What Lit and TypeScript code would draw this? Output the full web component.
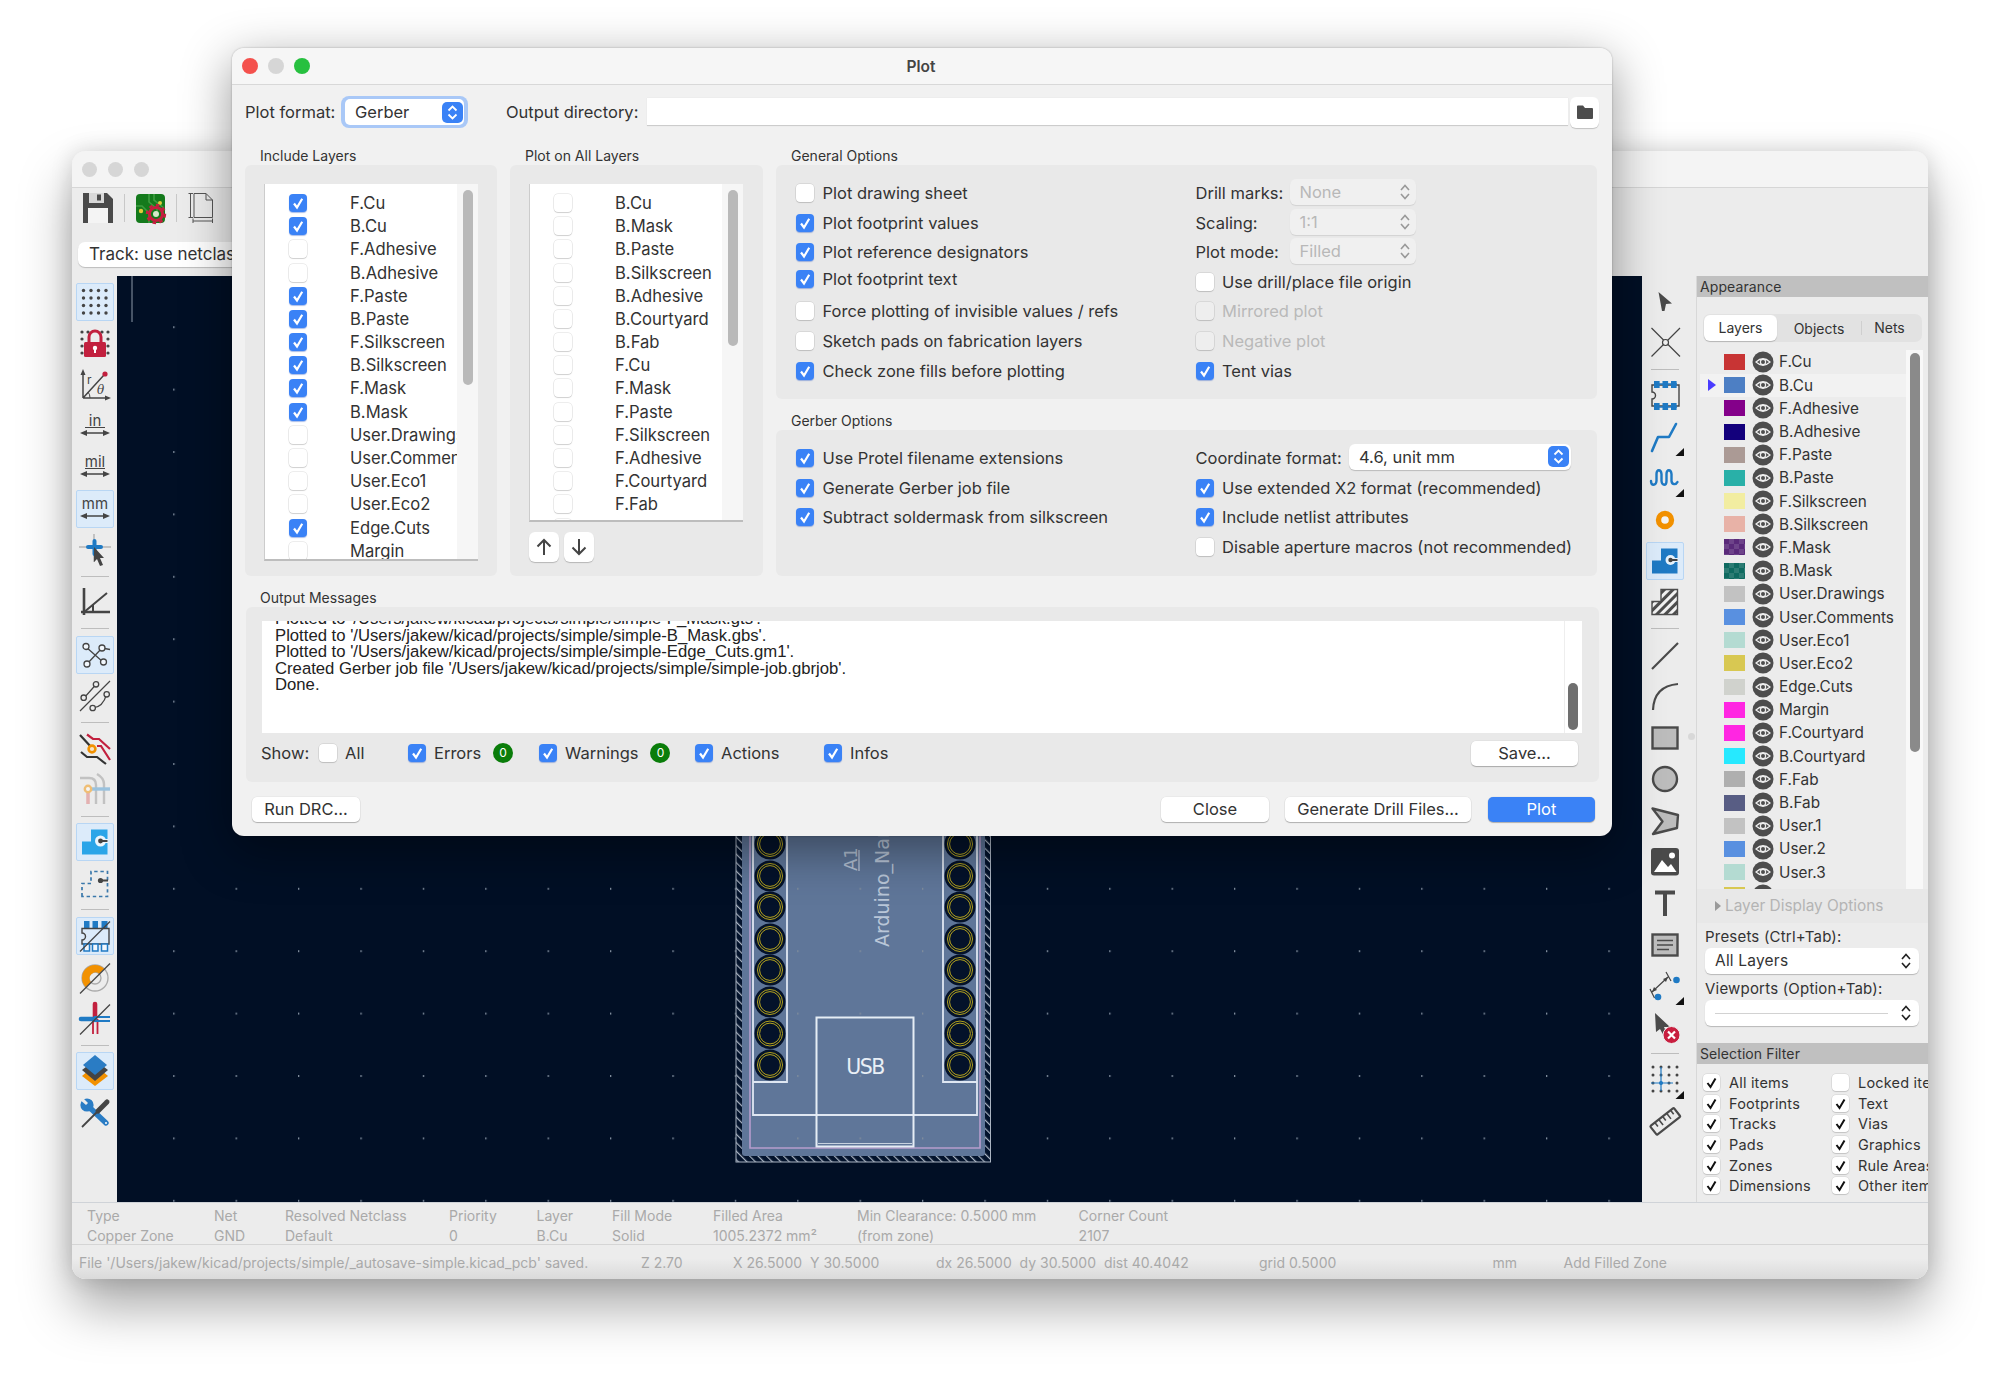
import { LitElement, html, css, svg } from "lit";
import { customElement } from "lit/decorators.js";

const DARK = "#4a4a4a";
const BLUE = "#1f7ac4";
const RED = "#c2203e";
const ORANGE = "#f29100";

const range = (a: number[], b: number[], r: number, c: string) =>
  a.flatMap((x) => b.map((y) => svg`<circle cx=${x} cy=${y} r=${r} fill=${c}></circle>`));

const flyout = svg`<polygon points="26.5,35 35,27 35,35" fill="#111"></polygon>`;
const slash = svg`<path d="M1 31.5L31 1.5" stroke="#444" stroke-width="1.3" fill="none"></path>`;
const arrows = svg`<path d="M4 23H28" stroke="#444" stroke-width="1.5"></path><polygon points="1,23 8,20 8,26" fill="#444"></polygon><polygon points="31,23 24,20 24,26" fill="#444"></polygon>`;
const unit = (t: string) =>
  svg`<text x="16" y="16" text-anchor="middle" font-family="Inter,sans-serif" font-size="15" fill="#444">${t}</text><path d="M6 17.5H26" stroke="#444" stroke-width="1" opacity=${t === "mm" ? 0 : 1}></path>${arrows}`;

const zoneShape = "M3 28.5V15.5H12V3.5H28.5V28.5Z";

const icons: Record<string, unknown> = {
  grid: range([4.5, 12, 19.5, 27], [4.5, 12, 19.5, 27], 1.7, "#444"),
  lock: svg`${range([3, 29], [5, 12, 19, 26], 1.6, "#444")}${range([9, 23], [5], 1.6, "#444")}
    <path d="M10 17V10a6 6 0 0 1 12 0v7" fill="none" stroke=${RED} stroke-width="3"></path>
    <rect x="5" y="15" width="22" height="15" rx="1.5" fill=${RED}></rect>
    <circle cx="16" cy="21" r="2.2" fill="#fff"></circle><rect x="15" y="21" width="2" height="5" fill="#fff"></rect>`,
  polar: svg`<path d="M4 30H29M4 30V5M4 30L25 7" stroke="#444" stroke-width="1.5" fill="none"></path>
    <polygon points="32,30 26,27.5 26,32.5" fill="#444"></polygon><polygon points="4,1 1.5,7 6.5,7" fill="#444"></polygon>
    <circle cx="26" cy="6" r="2.6" fill=${RED}></circle>
    <path d="M11 30a9 9 0 0 0 -2 -6" stroke="#444" fill="none"></path>
    <text x="8" y="16" font-family="Inter,sans-serif" font-size="12" fill="#444">r</text>
    <text x="18" y="26" font-family="DejaVu Serif,serif" font-style="italic" font-size="12" fill="#444">θ</text>`,
  in: unit("in"),
  mil: unit("mil"),
  mm: unit("mm"),
  cursor: svg`<path d="M0 13H32M15 0V28" stroke="#999" stroke-width="1"></path>
    <path d="M9 13H22M15.5 7V20" stroke="#1f7ac4" stroke-width="4" stroke-linecap="round"></path>
    <polygon points="15,13 25,24 21,24 24,31 21,32 18,25 15,28" fill="#444"></polygon>`,
  corner: svg`<path d="M5 2V29M2 26H31" stroke="#444" stroke-width="2.6" fill="none"></path>
    <path d="M4 27L28 7M14 18V26" stroke="#444" stroke-width="2" fill="none"></path>`,
  net: svg`<path d="M7 8L24 23M8 25L23 9L31 10.5" stroke="#444" stroke-width="1.3" fill="none"></path>
    <g fill="#f2f7fc" stroke="#444" stroke-width="1.3"><circle cx="7" cy="7.5" r="3"></circle><circle cx="23" cy="9" r="3"></circle><circle cx="8" cy="25" r="3"></circle><circle cx="24.5" cy="23" r="3"></circle></g>`,
  curved: svg`<path d="M1 31L31 1M5 18L17 4.5M14 28Q24 27 27.5 14.5" stroke="#444" stroke-width="1.2" fill="none"></path>
    <g fill="#ececec" stroke="#444" stroke-width="1.3"><circle cx="4.7" cy="17.7" r="2.7"></circle><circle cx="17" cy="4.3" r="2.7"></circle><circle cx="13.7" cy="28" r="2.7"></circle><circle cx="27.7" cy="14.3" r="2.7"></circle></g>`,
  trackvia: svg`<path d="M8 1.5L14 6H20L31 16M18 13H22L31 27" stroke=${RED} stroke-width="2.2" fill="none"></path>
    <path d="M1 2L13 15M2 19L8 24H18L27 31" stroke="#333" stroke-width="2.2" fill="none"></path>
    <circle cx="13" cy="16" r="3.4" fill="#f4e3c8" stroke=${ORANGE} stroke-width="2.6"></circle>`,
  faded: svg`<g opacity=".5" fill="none"><path d="M1 4H10Q17 4 17 11V30" stroke="#999" stroke-width="2.4"></path><path d="M18 0Q25 4 25 10V30" stroke="#999" stroke-width="2.4"></path><path d="M9 18V30" stroke="#d77" stroke-width="3.5"></path><path d="M12 15H31" stroke="#4b9ad1" stroke-width="3.4"></path><circle cx="9" cy="15" r="3.2" stroke=${ORANGE} stroke-width="2.4" fill="#fff"></circle></g>`,
  zoneA: svg`<path d=${zoneShape} fill="#2aa5e8"></path><circle cx="21.5" cy="15" r="5.5" fill="#eaf6fd"></circle><rect x="22" y="13" width="7" height="4" fill="#eaf6fd"></rect><circle cx="21.5" cy="15" r="2.4" fill="#444"></circle><path d="M21.5 15H28.5" stroke="#444" stroke-width="2"></path>`,
  zoneD: svg`<path d=${zoneShape} fill="none" stroke="#3a78ab" stroke-width="1.7" stroke-dasharray="3.4 2.8"></path><circle cx="21.5" cy="12.5" r="2.6" fill="#444"></circle><path d="M21.5 12.5H29" stroke="#444" stroke-width="2"></path>`,
  fpSlash: svg`<g fill=${BLUE}><rect x="5" y="1" width="5.5" height="7"></rect><rect x="13.5" y="1" width="5.5" height="7"></rect><rect x="22.5" y="1" width="6" height="7"></rect></g>
    <path d="M3 8.5H30V24H3V20a3.5 3.5 0 0 0 0 -7Z" fill="none" stroke="#444" stroke-width="1.4"></path>
    <g fill="#f2f7fc" stroke=${BLUE} stroke-width="1.5"><rect x="5" y="24" width="5.5" height="7"></rect><rect x="13.5" y="24" width="5.5" height="7"></rect><rect x="22.5" y="24" width="6" height="7"></rect></g>${slash}`,
  padSlash: svg`<circle cx="16" cy="16" r="13" fill="none" stroke="#aaa" stroke-width="1.3"></circle><circle cx="16" cy="16" r="6" fill="none" stroke="#aaa" stroke-width="1.3"></circle>
    <path d="M25.2 6.8A13 13 0 0 0 6.8 25.2L11.8 20.2A6 6 0 0 1 20.2 11.8Z" fill=${ORANGE}></path>${slash}`,
  trackSlash: svg`<path d="M16 1V17" stroke=${RED} stroke-width="4.6" stroke-linecap="round"></path><path d="M14 16V31M18.5 16V31" stroke=${RED} stroke-width="1.8"></path>
    <path d="M2 16H16" stroke=${BLUE} stroke-width="4.6" stroke-linecap="round"></path><path d="M15 14H31M15 18H31" stroke=${BLUE} stroke-width="1.8"></path>${slash}`,
  layers: svg`<polygon points="3,21 16,10 29,21 16,31" fill=${ORANGE}></polygon><polygon points="3,15 16,5 29,15 16,26" fill="#444"></polygon><polygon points="4,10 16,0 28,10 16,20" fill="#2a7cc4"></polygon>`,
  tools: svg`<path d="M9 9L27 26" stroke="#2a7cc4" stroke-width="5.4" stroke-linecap="round"></path><circle cx="8" cy="8" r="6.6" fill="#2a7cc4"></circle>
    <polygon points="2,-1 9,6 7,8 0,2" fill="#ececec"></polygon><circle cx="27" cy="26" r="1" fill="#fff"></circle>
    <path d="M3 30L19 14" stroke="#444" stroke-width="1.8"></path><path d="M19 14L28 5" stroke="#444" stroke-width="5" stroke-linecap="round"></path>`,
  arrow: svg`<polygon points="9.5,6 23,17.5 17,18 15.5,25 13,25" fill=${DARK}></polygon>`,
  cross: svg`<path d="M2.5 1L31 29.5M31 1L2.5 29.5" stroke="#444" stroke-width="1.2"></path><circle cx="16.5" cy="15.5" r="3" fill="#f0f0f0" stroke="#444" stroke-width="1.2"></circle>`,
  fp: svg`<path d="M3 6H30V27H3V20a3.5 3.5 0 0 0 0 -7Z" fill="none" stroke="#444" stroke-width="1.4"></path><g fill="#1f7ac4">${[5, 13.5, 22].map((x) => svg`<rect x=${x} y="2" width="5.6" height="7"></rect><rect x=${x} y="24" width="5.6" height="7"></rect>`)}</g><path d="M5 5H28M5 28H28" stroke=${BLUE} stroke-width="1.6"></path>`,
  route: svg`<path d="M3 30L9 16H20L27 3" fill="none" stroke=${BLUE} stroke-width="2.6" stroke-linecap="round" stroke-linejoin="round"></path>${flyout}`,
  tune: svg`<path d="M2 19c0 5 5 5 5.5 0V12c0-5 4.5-5 5 0v7c.5 5 5 5 5 0v-7c0-5 4.5-5 5 0v7c.5 4 4.5 4 6 1" fill="none" stroke=${BLUE} stroke-width="2.4" stroke-linecap="round"></path>${flyout}`,
  via: svg`<circle cx="16" cy="16" r="6.5" fill="#f4f4f4" stroke=${ORANGE} stroke-width="5.4"></circle>`,
  zoneB: svg`<path d=${zoneShape} fill=${BLUE}></path><circle cx="21.5" cy="15" r="5" fill="#e6f2fb"></circle><rect x="22" y="13" width="7" height="4" fill="#e6f2fb"></rect><circle cx="21.5" cy="15" r="2.2" fill="#444"></circle><path d="M21.5 15H28.5" stroke="#444" stroke-width="2"></path>`,
  hatch: svg`<defs><pattern id="hp" width="6" height="6" patternUnits="userSpaceOnUse" patternTransform="rotate(45)"><rect width="6" height="6" fill="#f2f2f2"></rect><rect width="3" height="6" fill="#4d4d4d"></rect></pattern></defs><path d=${zoneShape} fill="url(#hp)" stroke="#4d4d4d" stroke-width="1.4"></path>`,
  line: svg`<path d="M3 30L29 4" stroke=${DARK} stroke-width="2.2"></path>`,
  arc: svg`<path d="M4 30Q5 6 29 4" fill="none" stroke=${DARK} stroke-width="2.2"></path>`,
  rect: svg`<rect x="3.5" y="5.5" width="25" height="21" fill="#bcbcbc" stroke=${DARK} stroke-width="2.4"></rect>`,
  circle: svg`<circle cx="16" cy="16" r="12" fill="#bcbcbc" stroke=${DARK} stroke-width="2.4"></circle>`,
  poly: svg`<path d="M3.5 4.5L29 11L28 24L4 30L13.5 17.5Z" fill="#bcbcbc" stroke=${DARK} stroke-width="2.4" stroke-linejoin="round"></path>`,
  image: svg`<rect x="2" y="2" width="28" height="27.5" rx="3" fill=${DARK}></rect><path d="M5 26L13 14L19 21L22 18L27.5 26Z" fill="#fff"></path><circle cx="23" cy="9.5" r="3" fill="#fff"></circle>`,
  text: svg`<path d="M6 5.5H26M16 5.5V29" stroke=${DARK} stroke-width="4" fill="none"></path>`,
  textbox: svg`<rect x="3.5" y="5.5" width="25" height="21" fill="#bcbcbc" stroke=${DARK} stroke-width="2.4"></rect><path d="M8 11.5H24M8 16H24M8 20.5H20" stroke=${DARK} stroke-width="1.4"></path>`,
  dim: svg`<path d="M3 22L19 7M5.5 28L1 19M22 11L17 2" stroke="#444" stroke-width="1.2" fill="none"></path><polygon points="3,22 8,20 5,17" fill="#444"></polygon><polygon points="19,7 14,9 17,12" fill="#444"></polygon><circle cx="9" cy="27" r="3.3" fill=${BLUE}></circle><circle cx="27.5" cy="10" r="3.3" fill=${BLUE}></circle>${flyout}`,
  del: svg`<polygon points="6,2 21,16 15,16 19,25 16,27 11,18 7,21" fill=${DARK}></polygon><circle cx="22.5" cy="24" r="8.5" fill="#c81e3f" stroke="#eee" stroke-width="1"></circle><path d="M19 20.5L26 27.5M26 20.5L19 27.5" stroke="#fff" stroke-width="2.2"></path>`,
  gridCross: svg`${range([4, 12, 20, 28], [3, 11, 19, 27], 1.5, "#444")}<path d="M12 3V27M2 19H24" stroke=${BLUE} stroke-width="1.2"></path><circle cx="12" cy="19" r="2" fill=${BLUE}></circle>${flyout}`,
  ruler: svg`<g transform="rotate(-38 16 16)"><rect x="1" y="11" width="30" height="11" rx="1" fill="none" stroke=${DARK} stroke-width="2.2"></rect><path d="M7 11V16M12 11V18M17 11V16M22 11V18M27 11V16" stroke=${DARK} stroke-width="1.6"></path></g>`,
};

const icon = (n: string, size = 32) =>
  html`<svg class="ic" width=${size} height=${size} viewBox="0 0 32 32">${icons[n]}</svg>`;

const leftTools = ["grid*", "lock", "polar", "in", "mil", "mm*", "cursor", "-", "corner", "-", "net*", "curved", "-", "trackvia", "faded", "-", "zoneA*", "zoneD", "-", "fpSlash*", "padSlash", "trackSlash", "-", "layers*", "tools"];
const rightTools = ["arrow", "cross", "-", "fp", "route", "tune", "via", "zoneB*", "hatch", "-", "line", "arc", "rect", "circle", "poly", "image", "text", "textbox", "dim", "del", "-", "gridCross", "ruler"];

const toolStrip = (items: string[]) =>
  items.map((t) =>
    t === "-"
      ? html`<div class="tdiv"></div>`
      : html`<div class="tool ${t.endsWith("*") ? "on" : ""}">${icon(t.replace("*", ""))}</div>`
  );

const check = (on: boolean, dis = false) =>
  html`<span class="cb ${on ? "on" : ""} ${dis ? "dis" : ""}">${on ? html`<svg width="18" height="18" viewBox="0 0 18 18"><path d="M5 9.5L8 13.5L13.2 4.8" fill="none" stroke="#fff" stroke-width="2.2"></path></svg>` : ""}</span>`;

const stepBlue = html`<span class="stepblue"><svg width="21" height="21" viewBox="0 0 21 21"><path d="M6.5 8.5L10.5 4.5L14.5 8.5M6.5 12.5L10.5 16.5L14.5 12.5" fill="none" stroke="#fff" stroke-width="1.8"></path></svg></span>`;
const stepGrey = (c: string) => html`<svg width="12" height="20" viewBox="0 0 12 20"><path d="M2 8L6 3.5L10 8M2 12L6 16.5L10 12" fill="none" stroke=${c} stroke-width="1.6"></path></svg>`;

const inc: [string, boolean][] = [["F.Cu", true], ["B.Cu", true], ["F.Adhesive", false], ["B.Adhesive", false], ["F.Paste", true], ["B.Paste", true], ["F.Silkscreen", true], ["B.Silkscreen", true], ["F.Mask", true], ["B.Mask", true], ["User.Drawings", false], ["User.Comments", false], ["User.Eco1", false], ["User.Eco2", false], ["Edge.Cuts", true], ["Margin", false]];
const all = ["B.Cu", "B.Mask", "B.Paste", "B.Silkscreen", "B.Adhesive", "B.Courtyard", "B.Fab", "F.Cu", "F.Mask", "F.Paste", "F.Silkscreen", "F.Adhesive", "F.Courtyard", "F.Fab", ""];

const layers: [string, string, boolean?][] = [["F.Cu", "#c83434"], ["B.Cu", "#4d7fc4"], ["F.Adhesive", "#84008a"], ["B.Adhesive", "#13007c"], ["F.Paste", "#ab9a95"], ["B.Paste", "#29b0a8"], ["F.Silkscreen", "#f2eda1"], ["B.Silkscreen", "#e8b2a7"], ["F.Mask", "#5a2a7a", true], ["B.Mask", "#0f6a60", true], ["User.Drawings", "#c2c2c2"], ["User.Comments", "#5990e0"], ["User.Eco1", "#b4dbd2"], ["User.Eco2", "#d8c852"], ["Edge.Cuts", "#d0d2cd"], ["Margin", "#ff26e2"], ["F.Courtyard", "#ff26e2"], ["B.Courtyard", "#26e9ff"], ["F.Fab", "#afafaf"], ["B.Fab", "#585d84"], ["User.1", "#c2c2c2"], ["User.2", "#5990e0"], ["User.3", "#b4dbd2"], ["", "#d8c852"]];

const filters: [string, boolean, string, boolean][] = [["All items", true, "Locked items", false], ["Footprints", true, "Text", true], ["Tracks", true, "Vias", true], ["Pads", true, "Graphics", true], ["Zones", true, "Rule Areas", true], ["Dimensions", true, "Other items", true]];

const info: [string, string][] = [["Type", "Copper Zone"], ["Net", "GND"], ["Resolved Netclass", "Default"], ["Priority", "0"], ["Layer", "B.Cu"], ["Fill Mode", "Solid"], ["Filled Area", "1005.2372 mm²"], ["Min Clearance: 0.5000 mm", "(from zone)"], ["Corner Count", "2107"]];
const status = ["File '/Users/jakew/kicad/projects/simple/_autosave-simple.kicad_pcb' saved.", "Z 2.70", "X 26.5000  Y 30.5000", "dx 26.5000  dy 30.5000  dist 40.4042", "grid 0.5000", "mm", "Add Filled Zone"];

const pads = [844, 876, 907, 939, 970, 1002, 1033.5, 1065];

const pcb = html`<svg class="pcb" viewBox="117 276 1525 926" width="1525" height="926">
  <defs>
    <pattern id="gridp" x="48.4" y="76.6" width="62.4" height="62.4" patternUnits="userSpaceOnUse"><rect x="0" y="0" width="1.3" height="2" fill="#7f8c9c"></rect></pattern>
    <pattern id="court" width="6" height="6" patternUnits="userSpaceOnUse" patternTransform="rotate(-45)"><rect width="6" height="6" fill="#03132c"></rect><rect width="1.2" height="6" fill="#aab4c2"></rect></pattern>
  </defs>
  <rect x="117" y="276" width="1525" height="926" fill="#010f25"></rect>
  <path d="M132 276V322" stroke="#8d99a9" stroke-width="1"></path>
  <rect x="736" y="600" width="254.5" height="562" fill="url(#court)" stroke="#aab4c2" stroke-width="1"></rect>
  <rect x="742" y="600" width="243" height="556" rx="3" fill="#5f7699"></rect>
  <rect x="117" y="276" width="1525" height="926" fill="url(#gridp)"></rect>
  <path d="M750 800V1148H980V800" fill="none" stroke="#b69dcc" stroke-width="1.6"></path>
  <path d="M753 800V1115H977V800M787 800V1082H753M943 800V1082H977" fill="none" stroke="#dfe7f2" stroke-width="1.8"></path>
  <rect x="816.5" y="1017.5" width="97" height="129" fill="none" stroke="#e6edf5" stroke-width="2"></rect>
  <path d="M818 1143.5H912" stroke="#c8d2df" stroke-width="1"></path>
  ${[770, 960].map((x) => pads.map((y) => svg`<circle cx=${x} cy=${y} r="15.5" fill="#04122a"></circle><circle cx=${x} cy=${y} r="12.5" fill="none" stroke="#b4a31e" stroke-width="1"></circle><circle cx=${x} cy=${y} r="10.4" fill="none" stroke="#b4a31e" stroke-width="1"></circle>`))}
  <text x="865" y="1074" text-anchor="middle" font-family="DejaVu Sans,sans-serif" font-size="20.5" letter-spacing="-1.6" fill="#e9eff6">USB</text>
  <text transform="translate(857 871) rotate(-90)" font-family="DejaVu Sans,sans-serif" font-size="18" fill="#b3c1d4">A1</text>
  <path d="M859 850V871" stroke="#b3c1d4" stroke-width="1.4"></path>
  <text transform="translate(888.5 947) rotate(-90)" font-family="DejaVu Sans,sans-serif" font-size="19" fill="#b9c6d8">Arduino_Nano</text>
</svg>`;

@customElement("app-root")
export class AppRoot extends LitElement {
  static styles = css`
    :host { display: block; position: relative; width: 2000px; height: 1375px; overflow: hidden; background: #fff; font-family: Inter, "Liberation Sans", sans-serif; color: #333; }
    * { box-sizing: border-box; }
    .ic { display: block; overflow: visible; }

    .win { position: absolute; left: 72px; top: 151px; width: 1856px; height: 1128px; border-radius: 14px; background: #ececec; display: flex; flex-direction: column; overflow: hidden; }
    .winshadow { position: absolute; left: 72px; top: 151px; width: 1856px; height: 1128px; border-radius: 14px; box-shadow: 0 28px 52px rgba(0,0,0,.34), 0 0 22px rgba(0,0,0,.14); }
    .wintitle { height: 37px; flex: none; display: flex; align-items: center; gap: 11px; padding-left: 10px; background: #f4f4f4; border-bottom: 1px solid #d6d6d6; }
    .light { width: 16px; height: 16px; border-radius: 50%; background: #d6d6d6; flex: none; }
    .wintitle .light { width: 15px; height: 15px; }
    .tb1 { height: 47px; flex: none; display: flex; align-items: center; gap: 11px; padding: 0 0 7px 11px; }
    .tb1 .sep { width: 1px; height: 28px; background: #c8c8c8; }
    .tb2 { height: 41px; flex: none; padding: 7px 0 0 6px; }
    .trk { width: 300px; height: 25px; border-radius: 7px; background: #fff; box-shadow: 0 1px 1px rgba(0,0,0,.2); font-size: 17px; line-height: 25px; padding-left: 11px; white-space: nowrap; overflow: hidden; color: #333; }
    .winbody { height: 926px; flex: none; display: flex; }
    .strip { flex: none; display: flex; flex-direction: column; align-items: center; padding-top: 5px; }
    .strip.l { width: 45px; }
    .strip.r { width: 54px; padding-right: 8px; position: relative; }
    .tool { width: 38px; height: 41.4px; flex: none; display: flex; align-items: center; justify-content: center; position: relative; }
    .tool.on::before { content: ""; position: absolute; left: 0; right: 0; top: 1.7px; bottom: 1.7px; background: #dcebfa; border: 1px solid #b8d6f4; border-radius: 2px; }
    .tool .ic { position: relative; }
    .tdiv { width: 28px; height: 11px; flex: none; display: flex; align-items: center; position: relative; }
    .tdiv::after { content: ""; width: 100%; height: 1px; background: #bdbdbd; }
    .sash { position: absolute; right: 1px; top: 457px; width: 7px; height: 7px; border-radius: 50%; background: #d8d8d8; }
    .canvas { width: 1525px; flex: none; position: relative; overflow: hidden; background: #010f25; }
    .pcb { display: block; }

    .panel { width: 232px; flex: none; display: flex; flex-direction: column; overflow: hidden; border-left: 1px solid #d8d8d8; font-size: 15.3px; color: #333; }
    .phead { height: 21px; flex: none; background: #c0c0c0; font-size: 14px; line-height: 21px; padding-left: 3px; letter-spacing: .1px; color: #333; }
    .tabs { margin: 17px 6px 8px 6px; width: 219px; height: 28px; flex: none; border-radius: 7px; background: #e2e2e2; display: grid; grid-template-columns: 74px 84px 1fr; align-items: center; text-align: center; font-size: 14px; position: relative; }
    .tabs .act { background: #fff; height: 26px; line-height: 26px; border-radius: 6px; margin-left: 1px; box-shadow: 0 1px 1px rgba(0,0,0,.2); }
    .tabs .nets { border-left: 1px solid #cfcfcf; height: 14px; line-height: 14px; padding-right: 5px; }
    .llist { height: 538.6px; flex: none; display: flex; padding-top: .4px; }
    .lrows { width: 205.5px; flex: none; margin-left: 3px; overflow: hidden; }
    .lrow { height: 23.2px; display: grid; grid-template-columns: 24px 21px 7px 22px 5px 1fr; align-items: center; white-space: nowrap; }
    .lrow.act { background: #f2f2f2; }
    .sw { width: 21px; height: 16px; }
    .sw.mask { background-image: repeating-conic-gradient(rgba(255,255,255,.12) 0 25%, transparent 0 50%); background-size: 10px 10px; }
    .tri { width: 0; height: 0; border-left: 8px solid #4a3cff; border-top: 6.5px solid transparent; border-bottom: 6.5px solid transparent; margin-left: 8px; }
    .lgut { width: 17px; flex: none; background: #f8f8f8; padding: 3px 3px 0 4px; }
    .lthumb { width: 10px; height: 399px; border-radius: 5px; background: #8a8a8a; }
    .ldo { height: 34.4px; flex: none; display: flex; align-items: center; gap: 2px; padding: 0 0 0 18px; background: #e8e8e8; color: #b4b4b4; font-size: 15.4px; }
    .ldo i { width: 0; height: 0; border-left: 6px solid #9a9a9a; border-top: 5px solid transparent; border-bottom: 5px solid transparent; margin-right: 2px; }
    .plabel { height: 25px; flex: none; line-height: 28px; padding-left: 8px; font-size: 15px; letter-spacing: .2px; }
    .plabel.two { height: 26.5px; line-height: 30px; }
    .psel { width: 214px; height: 26px; margin-left: 8px; flex: none; background: #fff; border-radius: 6px; box-shadow: 0 1px 1px rgba(0,0,0,.22); display: flex; align-items: center; justify-content: space-between; padding: 0 7px 0 10px; font-size: 15.5px; letter-spacing: .2px; }
    .psel .rule { flex: 1; height: 1px; background: #d2d2d2; margin-right: 12px; }
    .filtwrap { margin-top: 17px; flex: none; }
    .frows { display: grid; grid-template-columns: 129px 1fr 0; width: 250px; padding: 8px 0 0 6px; }
    .fcell { height: 20.6px; display: flex; align-items: center; gap: 9px; white-space: nowrap; font-size: 14.5px; letter-spacing: .2px; }
    .fcb { width: 17px; height: 17px; border-radius: 4px; background: #fff; flex: none; box-shadow: 0 0 0 .5px rgba(0,0,0,.12), 0 1px 1px rgba(0,0,0,.12); display: block; }

    .infop { height: 42px; flex: none; display: grid; grid-template-columns: 127px 71px 164px 87.5px 75.5px 101px 144px 221.6px 1fr; grid-template-rows: 20px 20px; padding: 3px 0 0 15px; font-size: 14px; color: #a9a9a9; line-height: 20px; white-space: nowrap; border-top: 1px solid #cfd3d8; }
    .statusb { height: 35px; flex: none; display: grid; grid-template-columns: 562px 92px 203px 323px 233.5px 71px 1fr; align-items: center; padding: 0 0 0 7px; font-size: 14px; color: #a9a9a9; white-space: pre; border-top: 1px solid #d5d5d5; background: linear-gradient(#ececec 40%, #dadada); }

    .dlg { position: absolute; left: 232px; top: 48px; width: 1380px; height: 788px; border-radius: 12px; background: #f1f1f1; box-shadow: 0 14px 50px rgba(0,0,0,.42), 0 0 2px rgba(0,0,0,.3); display: flex; flex-direction: column; font-size: 16.5px; color: #333; overflow: hidden; }
    .dtitle { height: 37px; flex: none; display: flex; align-items: center; padding-left: 10px; gap: 10px; background: #f6f6f6; border-bottom: 1px solid #d8d8d8; position: relative; }
    .dtitle b { position: absolute; left: 0; right: 2px; text-align: center; font-size: 15.5px; font-weight: 600; color: #444; }
    .fmt { height: 32px; margin-top: 11px; flex: none; display: flex; align-items: center; padding: 0 13px; }
    .fmt .lab { width: 96px; flex: none; }
    .fsel { width: 127px; height: 32px; flex: none; border-radius: 8px; background: #a9c8f7; padding: 3px 4px; }
    .fsel > div { height: 26px; background: #fff; border-radius: 5px; display: flex; align-items: center; justify-content: space-between; padding: 0 1px 0 10px; }
    .stepblue { width: 21px; height: 21px; border-radius: 5px; background: #3a82f6; flex: none; display: block; }
    .fmt .lab2 { margin-left: 38px; width: 141px; flex: none; }
    .dirin { flex: 1; height: 28px; background: #fff; border-bottom: 1px solid #ccc; box-shadow: 0 0 1px rgba(0,0,0,.1); }
    .folder { width: 29px; height: 31px; margin-left: 2px; background: #fff; border-radius: 6px; box-shadow: 0 1px 1px rgba(0,0,0,.2); display: flex; align-items: center; justify-content: center; flex: none; }
    .groups { margin-top: 20px; padding: 0 13px; display: grid; grid-template-columns: 252px 253px 821px; column-gap: 13px; flex: none; }
    .gl { height: 17px; font-size: 14px; line-height: 16px; padding-left: 15px; white-space: nowrap; }
    .gbox { background: #e9e9e9; border-radius: 6px; }
    .box1 { height: 411px; padding: 19px; }
    .list { display: flex; width: 214px; height: 377px; background: #f6f6f6; border-bottom: 2px solid #bdbdbd; border-left: 1px solid #ccc; }
    .list.short { height: 338px; }
    .lbody { width: 192px; flex: none; background: #fff; overflow: hidden; padding-top: 7.4px; }
    .lgutter { flex: 1; padding: 6px 5px 0 6px; }
    .lgutter div { width: 10px; border-radius: 5px; background: #b9b9b9; height: 195px; }
    .short .lgutter div { height: 156px; }
    .irow { height: 23.2px; display: grid; grid-template-columns: 61px 1fr; align-items: center; padding-left: 24px; white-space: nowrap; font-size: 16.6px; }
    .cb { width: 18px; height: 18px; border-radius: 4px; background: #fff; display: block; flex: none; box-shadow: 0 0 0 .5px rgba(0,0,0,.14), 0 1px 1px rgba(0,0,0,.12); }
    .cb.on { background: #3a82f6; box-shadow: 0 1px 1px rgba(40,90,200,.4); }
    .cb svg { display: block; }
    .cb.dis { background: #eeeeee; }
    .arrowbtns { display: flex; flex-direction: row; gap: 5px; margin-top: 10px; }
    .abtn { width: 30px; height: 30px; background: #fff; border-radius: 6px; box-shadow: 0 1px 1px rgba(0,0,0,.22); display: flex; align-items: center; justify-content: center; }
    .col3 { display: flex; flex-direction: column; }
    .gen { height: 234px; padding: 13.2px 19px 0 20px; display: grid; grid-template-columns: 399.5px 1fr; grid-auto-flow: column; grid-template-rows: repeat(7, 29.6px); }
    .ger { height: 146px; padding: 13.2px 19px 0 20px; display: grid; grid-template-columns: 399.5px 1fr; grid-auto-flow: column; grid-template-rows: repeat(4, 29.6px); }
    .lblgap { margin-top: 14px; }
    .opt { display: flex; align-items: center; gap: 8.5px; white-space: nowrap; }
    .opt.up { position: relative; top: -2.5px; }
    .opt.dn { position: relative; top: .5px; }
    .opt.dim { color: #b9b9b9; }
    .selrow { display: flex; align-items: center; }
    .selrow .n { width: 94px; flex: none; }
    .selrow .n.w { width: 153.5px; }
    .gsel { width: 126px; height: 26px; margin-bottom: 2px; border-radius: 6px; background: #f0f0f0; box-shadow: 0 1px 1px rgba(0,0,0,.1); display: flex; align-items: center; justify-content: space-between; padding: 0 5px 0 10px; color: #b8b8b8; }
    .csel { width: 222px; height: 26px; margin-bottom: 2px; border-radius: 6px; background: #fff; box-shadow: 0 1px 1px rgba(0,0,0,.2); display: flex; align-items: center; justify-content: space-between; padding: 0 2px 0 10px; }
    .om { margin: 14px 13px 0 14px; flex: none; }
    .om .gl { padding-left: 14px; }
    .ombox { height: 175px; margin-top: 0; padding: 14px 17px 0 16px; }
    .omtext { height: 112px; background: #fff; display: flex; overflow: hidden; }
    .msgs { flex: 1; padding-left: 13px; margin-top: -10px; font-family: "Liberation Sans", Arial, sans-serif; font-size: 16.7px; line-height: 16.6px; color: #222; white-space: pre; overflow: hidden; }
    .omgut { width: 18px; flex: none; border-left: 1px solid #eee; padding: 62px 3px 0 3px; background: #fff; }
    .omgut div { width: 10px; height: 47px; border-radius: 5px; background: #6f6f6f; }
    .showrow { margin: 4px 4px 0 -1px; height: 32px; display: flex; align-items: center; }
    .si { display: flex; align-items: center; gap: 8px; flex: none; white-space: nowrap; }
    .badge { width: 20px; height: 20px; border-radius: 50%; background: #0a7d0a; color: #fff; font-size: 12px; text-align: center; line-height: 20px; margin-left: 4px; flex: none; }
    .btn { height: 25px; border-radius: 5px; background: #fff; box-shadow: 0 1px 1px rgba(0,0,0,.25), 0 0 0 .5px rgba(0,0,0,.06); text-align: center; line-height: 25px; flex: none; white-space: nowrap; }
    .btn.save { width: 107px; margin-left: auto; }
    .foot { height: 25px; margin-top: 15px; padding: 0 17px 0 20px; flex: none; display: flex; gap: 16px; }
    .foot .run { width: 108px; margin-right: auto; }
    .foot .close { width: 108px; }
    .foot .gd { width: 186px; }
    .foot .plot { width: 107px; margin-left: 1px; background: #3a82f6; color: #fff; }
  `;

  render() {
    return html`
      <div class="winshadow"></div>
      <div class="win">
        <div class="wintitle"><span class="light"></span><span class="light"></span><span class="light"></span></div>
        <div class="tb1">
          <svg class="ic" width="30" height="30" viewBox="0 0 30 30"><path d="M0 0H24L30 6V30H0Z" fill=${DARK}></path><rect x="6" y="0" width="15" height="10" fill="#d8d8d8"></rect><rect x="14" y="1.5" width="4" height="6" fill=${DARK}></rect><rect x="5" y="15" width="20" height="15" fill="#f4f4f4"></rect></svg>
          <span class="sep"></span>
          <svg class="ic" width="29" height="29" viewBox="0 0 29 29"><rect width="29" height="29" rx="4" fill="#147a1c"></rect><path d="M13 0V8L21 15V18M18 0V6L28 14M0 12H6L13 19V29" fill="none" stroke="#3c9e40" stroke-width="1.6"></path><circle cx="5" cy="17" r="2.2" fill="#e2c93a"></circle><circle cx="24" cy="9" r="2" fill="#e2c93a"></circle><circle cx="20" cy="20" r="6.6" fill="none" stroke="#c41f3f" stroke-width="3"></circle><circle cx="20" cy="20" r="9" fill="none" stroke="#c41f3f" stroke-width="2.4" stroke-dasharray="3.5 3.5"></circle><circle cx="20" cy="20" r="3" fill="#d6e8c8"></circle></svg>
          <span class="sep"></span>
          <svg class="ic" width="25" height="30" viewBox="0 0 25 30"><path d="M6 .5H18L24.5 7V24.5H6ZM18 .5V7H24.5M.5 .5H5M.5 24.5H5M2.5 .5V24.5M5 28H24.5M5 25.5V30M24.5 25.5V30" fill="none" stroke="#555" stroke-width="1"></path></svg>
        </div>
        <div class="tb2"><div class="trk">Track: use netclass width</div></div>
        <div class="winbody">
          <div class="strip l">${toolStrip(leftTools)}</div>
          <div class="canvas">${pcb}</div>
          <div class="strip r">${toolStrip(rightTools)}<span class="sash"></span></div>
          <div class="panel">
            <div class="phead">Appearance</div>
            <div class="tabs"><div class="act">Layers</div><div>Objects</div><div class="nets">Nets</div></div>
            <div class="llist">
              <div class="lrows">
                ${layers.map(([n, c, m], i) => html`<div class="lrow ${i === 1 ? "act" : ""}"><span>${i === 1 ? html`<div class="tri"></div>` : ""}</span><div class="sw ${m ? "mask" : ""}" style="background-color:${c}"></div><span></span><svg class="ic" width="22" height="22" viewBox="0 0 22 22"><circle cx="11" cy="11" r="10.5" fill="#4d4d4d"></circle><path d="M4 11Q11 4.5 18 11Q11 17.5 4 11Z" fill="none" stroke="#eee" stroke-width="1.2"></path><circle cx="11" cy="11" r="2.6" fill="none" stroke="#eee" stroke-width="1.2"></circle></svg><span></span><span>${n}</span></div>`)}
              </div>
              <div class="lgut"><div class="lthumb"></div></div>
            </div>
            <div class="ldo"><i></i>Layer Display Options</div>
            <div class="plabel">Presets (Ctrl+Tab):</div>
            <div class="psel"><span>All Layers</span>${stepGrey("#222")}</div>
            <div class="plabel two">Viewports (Option+Tab):</div>
            <div class="psel"><span class="rule"></span>${stepGrey("#222")}</div>
            <div class="filtwrap">
              <div class="phead">Selection Filter</div>
              <div class="frows">
                ${filters.map(([a, ac, b, bc]) => html`
                  <div class="fcell"><span class="fcb">${ac ? html`<svg width="17" height="17" viewBox="0 0 17 17"><path d="M4.5 9L7.5 13L12.5 4.5" fill="none" stroke="#111" stroke-width="2"></path></svg>` : ""}</span>${a}</div>
                  <div class="fcell"><span class="fcb">${bc ? html`<svg width="17" height="17" viewBox="0 0 17 17"><path d="M4.5 9L7.5 13L12.5 4.5" fill="none" stroke="#111" stroke-width="2"></path></svg>` : ""}</span>${b}</div>
                  <div></div>`)}
              </div>
            </div>
          </div>
        </div>
        <div class="infop">
          ${info.map(([a]) => html`<div>${a}</div>`)}
          ${info.map(([, b]) => html`<div>${b}</div>`)}
        </div>
        <div class="statusb">${status.map((s) => html`<div>${s}</div>`)}</div>
      </div>

      <div class="dlg">
        <div class="dtitle"><span class="light" style="background:#f4514d"></span><span class="light"></span><span class="light" style="background:#27c03f"></span><b>Plot</b></div>
        <div class="fmt">
          <div class="lab">Plot format:</div>
          <div class="fsel"><div><span>Gerber</span>${stepBlue}</div></div>
          <div class="lab2">Output directory:</div>
          <div class="dirin"></div>
          <div class="folder"><svg width="18" height="16" viewBox="0 0 18 16"><path d="M1 2.5A1 1 0 0 1 2 1.5H7L9 4H16A1 1 0 0 1 17 5V14A1 1 0 0 1 16 15H2A1 1 0 0 1 1 14Z" fill="#4d4d4d"></path></svg></div>
        </div>
        <div class="groups">
          <div>
            <div class="gl">Include Layers</div>
            <div class="gbox box1"><div class="list"><div class="lbody">${inc.map(([n, c]) => html`<div class="irow">${check(c)}<span>${n}</span></div>`)}</div><div class="lgutter"><div></div></div></div></div>
          </div>
          <div>
            <div class="gl">Plot on All Layers</div>
            <div class="gbox box1"><div class="list short"><div class="lbody">${all.map((n) => html`<div class="irow">${check(false)}<span>${n}</span></div>`)}</div><div class="lgutter"><div></div></div></div>
              <div class="arrowbtns">
                <div class="abtn"><svg width="20" height="20" viewBox="0 0 20 20"><path d="M10 18V3M3.5 9.5L10 3L16.5 9.5" fill="none" stroke="#444" stroke-width="2"></path></svg></div>
                <div class="abtn"><svg width="20" height="20" viewBox="0 0 20 20"><path d="M10 2V17M3.5 10.5L10 17L16.5 10.5" fill="none" stroke="#444" stroke-width="2"></path></svg></div>
              </div>
            </div>
          </div>
          <div class="col3">
            <div class="gl">General Options</div>
            <div class="gbox gen">
              <div class="opt">${check(false)}Plot drawing sheet</div>
              <div class="opt">${check(true)}Plot footprint values</div>
              <div class="opt">${check(true)}Plot reference designators</div>
              <div class="opt up">${check(true)}Plot footprint text</div>
              <div class="opt">${check(false)}Force plotting of invisible values / refs</div>
              <div class="opt">${check(false)}Sketch pads on fabrication layers</div>
              <div class="opt">${check(true)}Check zone fills before plotting</div>
              <div class="selrow"><span class="n">Drill marks:</span><div class="gsel"><span>None</span>${stepGrey("#999")}</div></div>
              <div class="selrow"><span class="n">Scaling:</span><div class="gsel"><span>1:1</span>${stepGrey("#999")}</div></div>
              <div class="selrow"><span class="n">Plot mode:</span><div class="gsel"><span>Filled</span>${stepGrey("#999")}</div></div>
              <div class="opt dn">${check(false)}Use drill/place file origin</div>
              <div class="opt dim">${check(false, true)}Mirrored plot</div>
              <div class="opt dim">${check(false, true)}Negative plot</div>
              <div class="opt">${check(true)}Tent vias</div>
            </div>
            <div class="gl lblgap">Gerber Options</div>
            <div class="gbox ger">
              <div class="opt">${check(true)}Use Protel filename extensions</div>
              <div class="opt">${check(true)}Generate Gerber job file</div>
              <div class="opt">${check(true)}Subtract soldermask from silkscreen</div>
              <div></div>
              <div class="selrow"><span class="n w">Coordinate format:</span><div class="csel"><span>4.6, unit mm</span>${stepBlue}</div></div>
              <div class="opt">${check(true)}Use extended X2 format (recommended)</div>
              <div class="opt">${check(true)}Include netlist attributes</div>
              <div class="opt">${check(false)}Disable aperture macros (not recommended)</div>
            </div>
          </div>
        </div>
        <div class="om">
          <div class="gl">Output Messages</div>
          <div class="gbox ombox">
            <div class="omtext">
              <div class="msgs">Plotted to '/Users/jakew/kicad/projects/simple/simple-F_Mask.gts'.
Plotted to '/Users/jakew/kicad/projects/simple/simple-B_Mask.gbs'.
Plotted to '/Users/jakew/kicad/projects/simple/simple-Edge_Cuts.gm1'.
Created Gerber job file '/Users/jakew/kicad/projects/simple/simple-job.gbrjob'.
Done.</div>
              <div class="omgut"><div></div></div>
            </div>
            <div class="showrow">
              <div class="si" style="width:58px">Show:</div>
              <div class="si" style="width:89px">${check(false)}All</div>
              <div class="si" style="width:131px">${check(true)}Errors<span class="badge">0</span></div>
              <div class="si" style="width:156px">${check(true)}Warnings<span class="badge">0</span></div>
              <div class="si" style="width:129px">${check(true)}Actions</div>
              <div class="si">${check(true)}Infos</div>
              <div class="btn save">Save...</div>
            </div>
          </div>
        </div>
        <div class="foot">
          <div class="btn run">Run DRC...</div>
          <div class="btn close">Close</div>
          <div class="btn gd">Generate Drill Files...</div>
          <div class="btn plot">Plot</div>
        </div>
      </div>
    `;
  }
}
